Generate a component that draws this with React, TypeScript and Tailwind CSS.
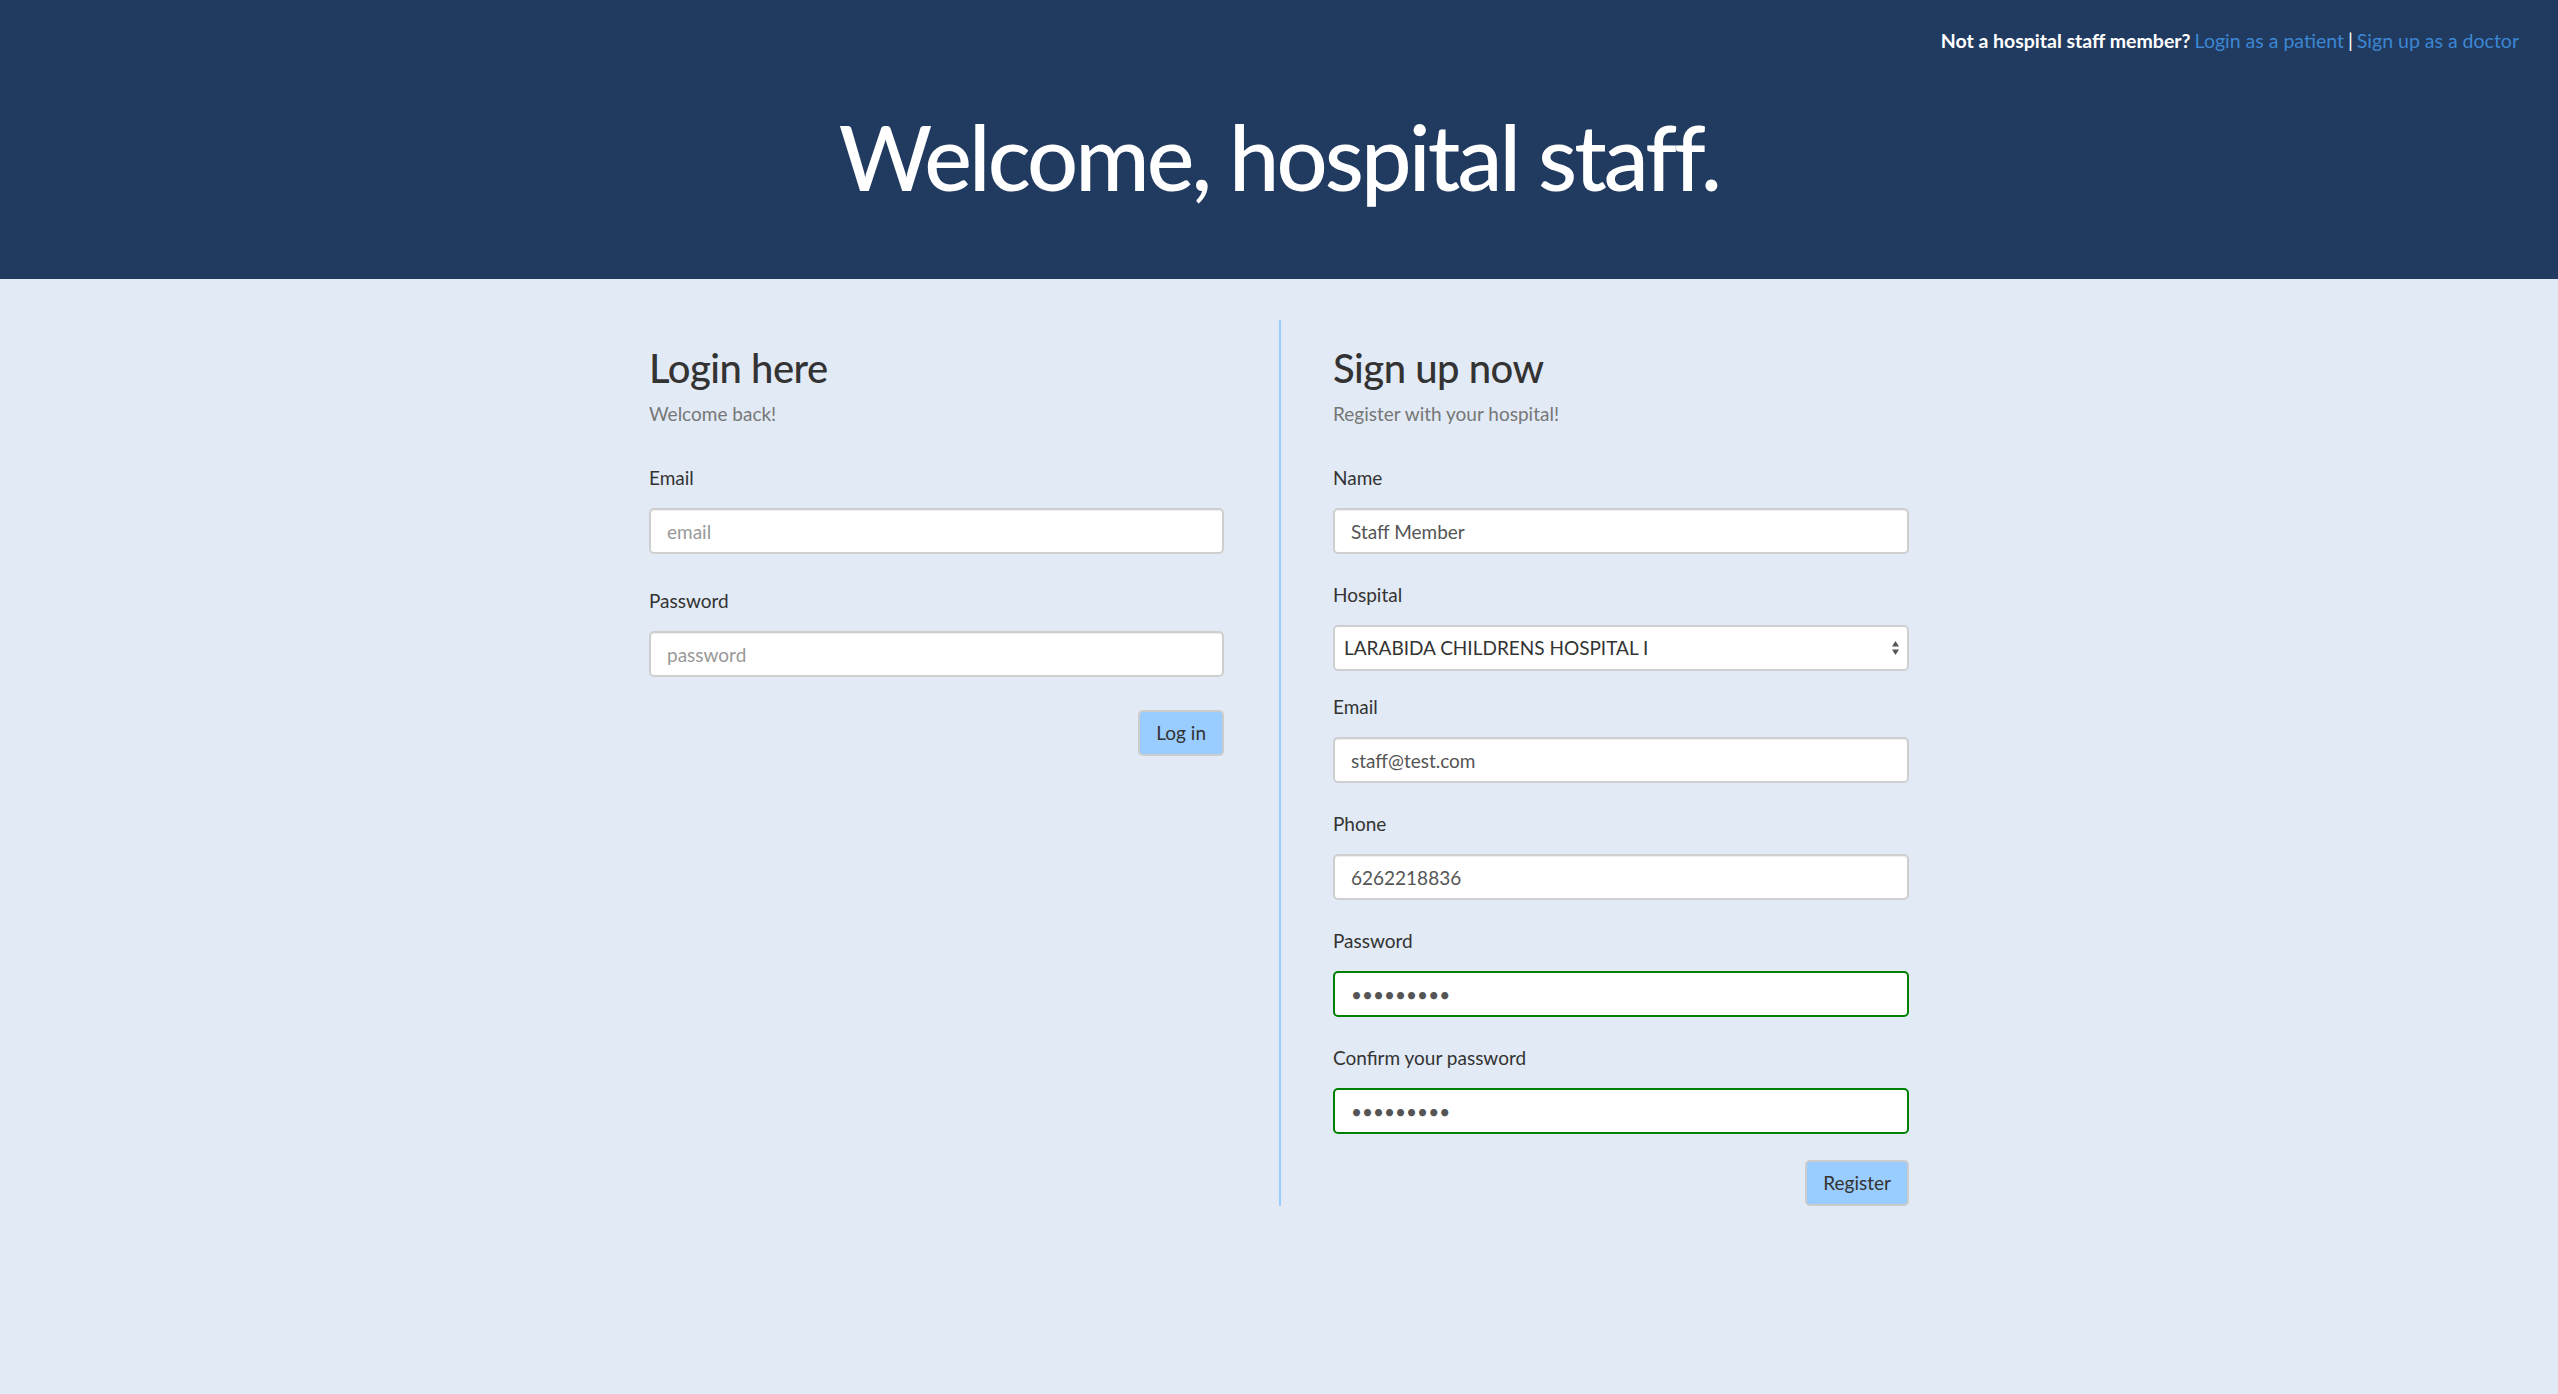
import React from "react";

// Staff login / signup page: navy header, two forms split by a thin blue rule.

function Field({
  label,
  children,
  className = "",
}: {
  label: string;
  children: React.ReactNode;
  className?: string;
}) {
  return (
    <div className={className}>
      <label className="block text-[19px] leading-[24px] text-[#333]">{label}</label>
      <div className="mt-[18px]">{children}</div>
    </div>
  );
}

const inputCls =
  "block h-[46px] w-full rounded-[5px] border-2 border-[#cfcfcf] bg-white px-[16px] text-[19px] text-[#555] shadow-[inset_0_1px_1px_rgba(0,0,0,0.075)] outline-none placeholder:text-[#999]";

const okCls =
  "block h-[46px] w-full rounded-[5px] border-2 border-[#008000] bg-white px-[16px] text-[19px] text-[#555] outline-none";

const btnCls =
  "h-[46px] rounded-[5px] border-2 border-[#cccccc] bg-[#99ccff] px-[16px] text-[19px] text-[#333]";

export default function App() {
  return (
    <div className="min-h-screen bg-[#e2eaf5] font-['Lato',sans-serif]">
      <header className="bg-[#213a5f] pb-[78px]">
        <div className="flex justify-end pr-[39px] pt-[29px] text-[19.5px] leading-[24px]">
          <span className="font-bold text-white">Not a hospital staff member?</span>
          <a className="ml-[4px] text-[#3c87d3]">Login as a patient</a>
          <span className="mx-[4px] text-white">|</span>
          <a className="text-[#3c87d3]">Sign up as a doctor</a>
        </div>
        <h1 className="mt-[58px] text-center text-[90px] leading-none font-medium tracking-[-2.9px] text-white">
          Welcome, hospital staff.
        </h1>
      </header>

      <main className="mx-auto mt-[41px] grid w-[1260px] grid-cols-2">
        <section className="pr-[55px] pt-[26px]">
          <h2 className="text-[40px] leading-[44px] font-medium tracking-[-0.5px] text-[#333]">Login here</h2>
          <p className="mt-[12px] text-[19px] leading-[24px] text-[#777]">Welcome back!</p>

          <Field label="Email" className="mt-[40px]">
            <input className={inputCls} placeholder="email" />
          </Field>
          <Field label="Password" className="mt-[35px]">
            <input className={inputCls} type="password" placeholder="password" />
          </Field>
          <div className="mt-[33px] flex justify-end">
            <button className={btnCls}>Log in</button>
          </div>
        </section>

        <section className="border-l-2 border-[#99ccff] pl-[52px] pt-[26px]">
          <h2 className="text-[40px] leading-[44px] font-medium tracking-[-0.5px] text-[#333]">Sign up now</h2>
          <p className="mt-[12px] text-[19px] leading-[24px] text-[#777]">Register with your hospital!</p>

          <Field label="Name" className="mt-[40px]">
            <input className={inputCls} defaultValue="Staff Member" />
          </Field>
          <Field label="Hospital" className="mt-[29px]">
            <div className="relative">
              <select className="block h-[46px] w-full appearance-none rounded-[5px] border-2 border-[#cfcfcf] bg-white pl-[9px] pr-[30px] text-[19px] text-[#333] outline-none">
                <option>LARABIDA CHILDRENS HOSPITAL I</option>
              </select>
              <svg
                className="pointer-events-none absolute right-[9px] top-1/2 -translate-y-1/2"
                width="9"
                height="16"
                viewBox="0 0 9 16"
              >
                <path d="M4.5 1 L8 6.5 H1 Z" fill="#555" />
                <path d="M4.5 15 L8 9.5 H1 Z" fill="#555" />
              </svg>
            </div>
          </Field>
          <Field label="Email" className="mt-[24px]">
            <input className={inputCls} defaultValue="staff@test.com" />
          </Field>
          <Field label="Phone" className="mt-[29px]">
            <input className={inputCls} defaultValue="6262218836" />
          </Field>
          <Field label="Password" className="mt-[29px]">
            <input className={okCls} type="password" defaultValue="123456789" />
          </Field>
          <Field label="Confirm your password" className="mt-[29px]">
            <input className={okCls} type="password" defaultValue="123456789" />
          </Field>
          <div className="mt-[26px] flex justify-end">
            <button className={btnCls}>Register</button>
          </div>
        </section>
      </main>
    </div>
  );
}
